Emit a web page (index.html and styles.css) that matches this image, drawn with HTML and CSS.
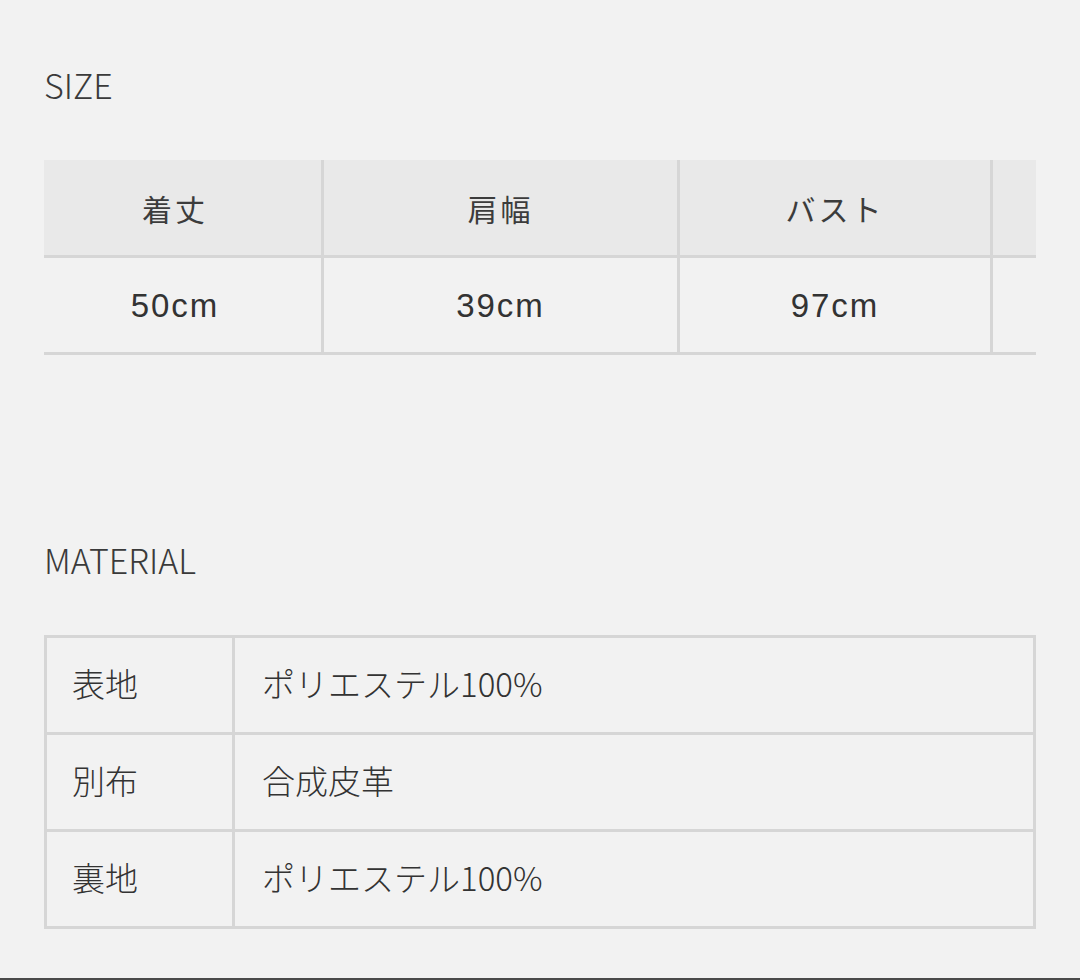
FILE: index.html
```html
<!DOCTYPE html>
<html lang="ja">
<head>
<meta charset="utf-8">
<title>SIZE / MATERIAL</title>
<link rel="stylesheet" href="styles.css">
</head>
<body>
<main class="page">
  <section class="section size-section">
    <h2 class="heading">SIZE</h2>
    <div class="size-scroll">
      <div class="size-grid">
        <div class="cell head first">着丈</div>
        <div class="cell head">肩幅</div>
        <div class="cell head">バスト</div>
        <div class="cell head"></div>
        <div class="cell val first">50cm</div>
        <div class="cell val">39cm</div>
        <div class="cell val">97cm</div>
        <div class="cell val"></div>
      </div>
    </div>
  </section>
  <section class="section material-section">
    <h2 class="heading">MATERIAL</h2>
    <div class="mat-grid">
      <div class="mcell label">表地</div>
      <div class="mcell value">ポリエステル100%</div>
      <div class="mcell label">別布</div>
      <div class="mcell value">合成皮革</div>
      <div class="mcell label">裏地</div>
      <div class="mcell value">ポリエステル100%</div>
    </div>
  </section>
</main>
<div class="home-bar"></div>
</body>
</html>
```

FILE: styles.css
```css
html, body {
  margin: 0;
  padding: 0;
}
body {
  background: #f2f2f2;
  color: #333333;
  font-family: "Noto Sans CJK JP", "Noto Sans", sans-serif;
  width: 1080px;
  height: 980px;
  overflow: hidden;
  display: flex;
  flex-direction: column;
}
.page {
  padding: 65px 44px 0 44px;
  display: flex;
  flex-direction: column;
}
.heading {
  margin: 0;
  font-family: "Noto Sans CJK JP", sans-serif;
  font-weight: 300;
  font-size: 34px;
  line-height: 40px;
  color: #3a3a3a;
  letter-spacing: 0;
}
.size-section .heading {
  margin-bottom: 55px;
}
.size-scroll {
  width: 992px;
  overflow: hidden;
}
.size-grid {
  display: grid;
  grid-template-columns: 277px 353px 310px 300px;
  grid-template-rows: 95px 94px;
  gap: 3px;
  padding-bottom: 3px;
  background: #d6d6d6;
  width: max-content;
}
.cell {
  display: flex;
  align-items: center;
  justify-content: center;
}
.cell.first {
  padding-right: 15px;
}
.head {
  background: #e9e9e9;
  font-family: "Noto Sans CJK JP", sans-serif;
  font-size: 30px;
  letter-spacing: 3px;
  color: #3c3c3c;
}
.val {
  background: #f2f2f2;
  font-family: "Liberation Sans", Arial, sans-serif;
  font-size: 33px;
  letter-spacing: 2px;
  color: #333333;
  padding-top: 2px;
}
.material-section {
  margin-top: 185px;
}
.material-section .heading {
  margin-bottom: 55px;
}
.mat-grid {
  width: 992px;
  box-sizing: border-box;
  display: grid;
  grid-template-columns: 185px 1fr;
  grid-auto-rows: 94px;
  gap: 3px;
  padding: 3px;
  background: #d6d6d6;
}
.mcell {
  background: #f2f2f2;
  display: flex;
  align-items: center;
  font-family: "Noto Sans CJK JP", sans-serif;
  font-weight: 300;
  font-size: 33px;
  color: #333333;
  padding-bottom: 4px;
}
.label {
  padding-left: 25px;
}
.value {
  padding-left: 27px;
}
.home-bar {
  margin-top: auto;
  height: 2px;
  background: #4a4a4a;
}
```
